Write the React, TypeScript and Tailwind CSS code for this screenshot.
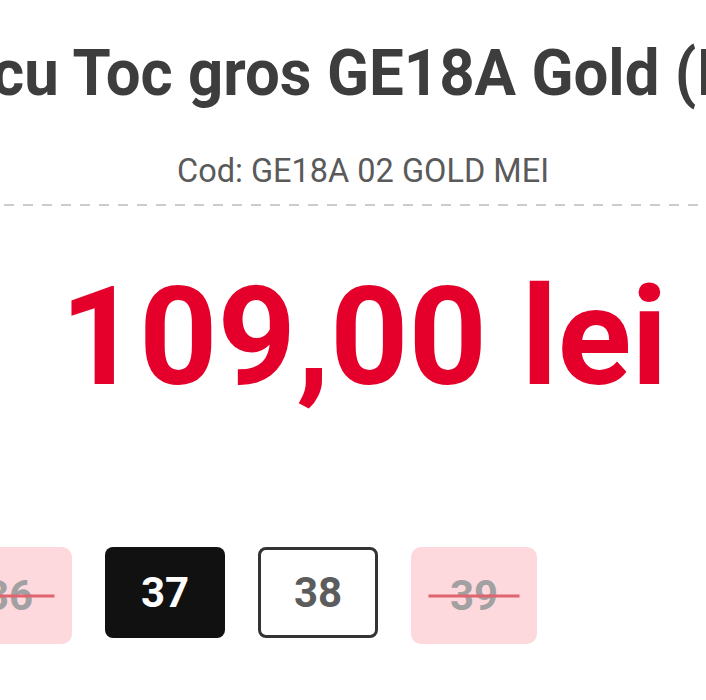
import React from "react";

type Size = { label: string; state: "out" | "selected" | "available" };

const sizes: Size[] = [
  { label: "36", state: "out" },
  { label: "37", state: "selected" },
  { label: "38", state: "available" },
  { label: "39", state: "out" },
];

const SizeBox = ({ size }: { size: Size }) => {
  if (size.state === "out") {
    return (
      <div className="relative flex h-[97px] w-[126px] shrink-0 items-center justify-center rounded-[10px] bg-[#fdd9de]">
        <span className="text-[42px] font-bold leading-none text-[#a2a0a1]">{size.label}</span>
        <span className="absolute left-1/2 top-1/2 h-[3px] w-[91px] -translate-x-1/2 -translate-y-1/2 bg-[#e0646e]" />
      </div>
    );
  }
  if (size.state === "selected") {
    return (
      <div className="flex h-[91px] w-[120px] shrink-0 items-center justify-center rounded-[8px] bg-[#111111]">
        <span className="text-[42px] font-bold leading-none text-white">{size.label}</span>
      </div>
    );
  }
  return (
    <div className="flex h-[91px] w-[120px] shrink-0 items-center justify-center rounded-[8px] border-[3px] border-[#333333] bg-white">
      <span className="text-[42px] font-bold leading-none text-[#5c5c5c]">{size.label}</span>
    </div>
  );
};

const App = () => {
  return (
    <div className="h-[700px] w-[706px] overflow-hidden bg-white font-['Roboto',sans-serif]">
      {/* product title, wider than the screen */}
      <div className="flex justify-center overflow-hidden whitespace-nowrap pt-[34px]">
        <h1 className="inline-block shrink-0 -translate-x-[24px] scale-x-[0.95] text-[65px] font-bold leading-[78px] text-[#3d3d3d]">
          Sandale Dama cu Toc gros GE18A Gold (Imitatie piele)
        </h1>
      </div>

      <p className="mt-[39px] pl-[20px] text-center text-[32.5px] leading-[40px] text-[#5a5a5a]">
        Cod: GE18A 02 GOLD MEI
      </p>

      <div className="mt-[13px] h-[2px] w-full bg-[repeating-linear-gradient(90deg,transparent_0_4px,#cccccc_4px_14px,transparent_14px_19px)]" />

      <div className="mt-[63px] pl-[22px] text-center text-[137px] font-bold leading-none text-[#e4002b]">
        109,00 lei
      </div>

      <div className="ml-[-54px] mt-[141px] flex items-start gap-[33px]">
        {sizes.map((s) => (
          <SizeBox key={s.label} size={s} />
        ))}
      </div>
    </div>
  );
};

export default App;
